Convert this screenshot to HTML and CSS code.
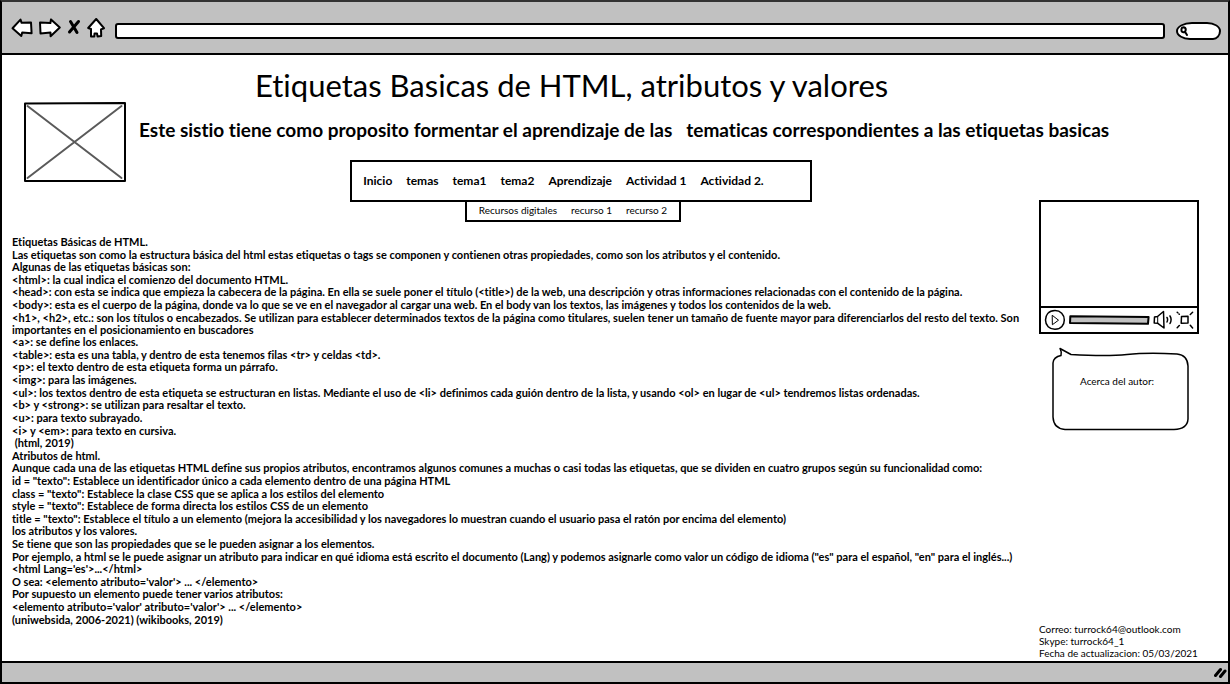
FILE: index.html
```html
<!DOCTYPE html>
<html lang="es">
<head>
<meta charset="utf-8">
<meta name="viewport" content="width=device-width, initial-scale=1">
<title>Etiquetas Basicas de HTML</title>
<link rel="stylesheet" href="styles.css">
</head>
<body>
<div class="browser">
  <div class="toolbar">
    <div class="toolbar-buttons">
      <button type="button" class="icon-button" aria-label="Atrás">
        <svg width="22" height="20" viewBox="0 0 22 20"><path class="sketch" d="M1.500 10.300 9.500 1.600 10.600 4.800 20 4.500 20.600 15.200 11.200 14.600 10.300 18Z"/></svg>
      </button>
      <button type="button" class="icon-button" aria-label="Adelante">
        <svg width="22" height="20" viewBox="0 0 22 20"><path class="sketch" d="M20.800 9.600 12 1.400 11.400 5 1 4.500 1.500 15.500 11.500 14.600 11.600 18.300Z"/></svg>
      </button>
      <button type="button" class="icon-button" aria-label="Detener">
        <svg width="14" height="20" viewBox="0 0 14 20"><path class="cross" d="M3.500 3.500 10 14.500M11.500 3.500 2.500 14"/></svg>
      </button>
      <button type="button" class="icon-button" aria-label="Inicio">
        <svg width="18" height="20" viewBox="0 0 18 20"><path class="sketch" d="M9.200 1 1.200 10 4 11 4 18.600 7.300 18.500 7.500 15.500 10 15.500 10.600 18.600 14.200 18 14 11.400 17 10.200Z"/></svg>
      </button>
    </div>
    <input class="address" type="text" aria-label="Dirección">
    <div class="search">
      <svg class="search-icon" width="8" height="10" viewBox="0 0 8 10" aria-hidden="true"><path d="M3.500 1.200C1 1.200.6 5.800 3.200 6.200 6.600 6.500 6.500 1.300 3.500 1.200M5 5.800 7 9"/></svg>
      <input class="search-input" type="search" aria-label="Buscar">
    </div>
  </div>

  <div class="page">
    <svg class="picture" width="102" height="80" viewBox="0 0 102 80" role="img" aria-label="Imagen">
      <path class="picture-frame" d="M1 1.500 101 1 101 79 1 79Z"/>
      <path class="picture-cross" d="M3.500 4 97.500 76M97.500 4 3.500 76"/>
    </svg>

    <header class="headings">
      <h1 class="title">Etiquetas Basicas de HTML, atributos y valores</h1>
      <p class="subtitle"><span>Este sistio tiene como proposito formentar el aprendizaje de las</span> <span>tematicas correspondientes a las etiquetas basicas</span></p>
    </header>

    <div class="menus">
      <nav class="menu" aria-label="Principal">
        <a href="#inicio">Inicio</a>
        <a href="#temas">temas</a>
        <a href="#tema1">tema1</a>
        <a href="#tema2">tema2</a>
        <a href="#aprendizaje">Aprendizaje</a>
        <a href="#actividad1">Actividad 1</a>
        <a href="#actividad2">Actividad 2.</a>
      </nav>
      <nav class="submenu" aria-label="Recursos">
        <a href="#recursos">Recursos digitales</a>
        <a href="#recurso1">recurso 1</a>
        <a href="#recurso2">recurso 2</a>
      </nav>
    </div>

    <main class="article">
      <p>Etiquetas Básicas de HTML.</p>
      <p>Las etiquetas son como la estructura básica del html estas etiquetas o tags se componen y contienen otras propiedades, como son los atributos y el contenido.</p>
      <p>Algunas de las etiquetas básicas son:</p>
      <p>&lt;html&gt;: la cual indica el comienzo del documento HTML.</p>
      <p>&lt;head&gt;: con esta se indica que empieza la cabecera de la página. En ella se suele poner el título (&lt;title&gt;) de la web, una descripción y otras informaciones relacionadas con el contenido de la página.</p>
      <p>&lt;body&gt;: esta es el cuerpo de la página, donde va lo que se ve en el navegador al cargar una web. En el body van los textos, las imágenes y todos los contenidos de la web.</p>
      <p>&lt;h1&gt;, &lt;h2&gt;, etc.: son los títulos o encabezados. Se utilizan para establecer determinados textos de la página como titulares, suelen tener un tamaño de fuente mayor para diferenciarlos del resto del texto. Son importantes en el posicionamiento en buscadores</p>
      <p>&lt;a&gt;: se define los enlaces.</p>
      <p>&lt;table&gt;: esta es una tabla, y dentro de esta tenemos filas &lt;tr&gt; y celdas &lt;td&gt;.</p>
      <p>&lt;p&gt;: el texto dentro de esta etiqueta forma un párrafo.</p>
      <p>&lt;img&gt;: para las imágenes.</p>
      <p>&lt;ul&gt;: los textos dentro de esta etiqueta se estructuran en listas. Mediante el uso de &lt;li&gt; definimos cada guión dentro de la lista, y usando &lt;ol&gt; en lugar de &lt;ul&gt; tendremos listas ordenadas.</p>
      <p>&lt;b&gt; y &lt;strong&gt;: se utilizan para resaltar el texto.</p>
      <p>&lt;u&gt;: para texto subrayado.</p>
      <p>&lt;i&gt; y &lt;em&gt;: para texto en cursiva.</p>
      <p>&nbsp;(html, 2019)</p>
      <p>Atributos de html.</p>
      <p>Aunque cada una de las etiquetas HTML define sus propios atributos, encontramos algunos comunes a muchas o casi todas las etiquetas, que se dividen en cuatro grupos según su funcionalidad como:</p>
      <p>id = "texto": Establece un identificador único a cada elemento dentro de una página HTML</p>
      <p>class = "texto": Establece la clase CSS que se aplica a los estilos del elemento</p>
      <p>style = "texto": Establece de forma directa los estilos CSS de un elemento</p>
      <p>title = "texto": Establece el título a un elemento (mejora la accesibilidad y los navegadores lo muestran cuando el usuario pasa el ratón por encima del elemento)</p>
      <p>los atributos y los valores.</p>
      <p>Se tiene que son las propiedades que se le pueden asignar a los elementos.</p>
      <p>Por ejemplo, a html se le puede asignar un atributo para indicar en qué idioma está escrito el documento (Lang) y podemos asignarle como valor un código de idioma ("es" para el español, "en" para el inglés...)</p>
      <p>&lt;html Lang='es'&gt;...&lt;/html&gt;</p>
      <p>O sea: &lt;elemento atributo='valor'&gt; ... &lt;/elemento&gt;</p>
      <p>Por supuesto un elemento puede tener varios atributos:</p>
      <p>&lt;elemento atributo='valor' atributo='valor'&gt; ... &lt;/elemento&gt;</p>
      <p>(uniwebsida, 2006-2021) (wikibooks, 2019)</p>
    </main>

    <aside class="sidebar">
      <div class="player">
        <div class="screen"></div>
        <div class="controls">
          <button type="button" class="icon-button" aria-label="Reproducir">
            <svg width="22" height="22" viewBox="0 0 22 22"><path class="line" d="M11 1.500C4.500 1.500 1.500 6 1.500 11 1.500 16.500 5.500 20.300 11 20.300 17 20.300 20.300 16 20.300 11 20.300 5.500 16.500 1.500 11 1.500Z"/><path class="thin" d="M8.500 6.500 14.500 11.200 8.700 15.500Z"/></svg>
          </button>
          <svg class="track" height="10" viewBox="0 0 80 10" preserveAspectRatio="none" role="img" aria-label="Progreso"><path d="M1.300 1.200 78.600 2 78 8.800 1 8Z"/></svg>
          <button type="button" class="icon-button" aria-label="Volumen">
            <svg width="20" height="20" viewBox="0 0 20 20"><path class="line" d="M1.500 7 4.500 6.500 10.500 1.500 11 18 4.800 13.300 1.200 13Z"/><path class="thin" d="M4.700 6.500V13.300"/><path class="line" d="M14 7.500Q15.200 9.500 14 12M17 6Q19.200 9.500 17 13.500"/></svg>
          </button>
          <button type="button" class="icon-button" aria-label="Pantalla completa">
            <svg width="18" height="18" viewBox="0 0 18 18"><path class="line" d="M5.500 5.500 12 5.200 12 12 5.200 12.300Z"/><path class="line" d="M1.200 1.200 1.800 1.800M3 3 3.300 3.300M14.300 3.500 16.600 1.300M1.200 16.700 3.300 14.500M14.300 14.300 16.600 17"/></svg>
          </button>
        </div>
      </div>

      <section class="bubble">
        <svg class="bubble-shape" viewBox="0 0 137 84" preserveAspectRatio="none" aria-hidden="true"><path d="M9 8.500Q1.500 10 1 16V70Q1.500 81.500 13 82.500H122Q135.500 82 136 72V19Q135.500 8 125 7Q95 5.500 75 7.500T19 7.500L8 1.500Q10 5 9 8.500"/></svg>
        <p class="bubble-text">Acerca del autor:</p>
      </section>

      <address class="contact">
        <p>Correo: turrock64@outlook.com</p>
        <p>Skype: turrock64_1</p>
        <p>Fecha de actualizacion: 05/03/2021</p>
      </address>
    </aside>
  </div>

  <div class="statusbar">
    <svg width="13" height="12" viewBox="0 0 13 12" aria-hidden="true"><path class="grip" d="M1.500 8.500 6.500 2.500M6.500 9.500 11 4"/></svg>
  </div>
</div>
</body>
</html>
```
FILE: styles.css
```css
* {
  box-sizing: border-box;
}

body {
  margin: 0;
  background: #fff;
  color: #000;
  font-family: Lato, "Open Sans", sans-serif;
  font-variant-ligatures: none;
}

h1,
p {
  margin: 0;
}

a {
  color: inherit;
  text-decoration: none;
}

svg {
  display: block;
  fill: none;
  stroke: #000;
  stroke-linecap: round;
  stroke-linejoin: round;
}

.browser {
  display: flex;
  flex-direction: column;
  min-height: 100vh;
  border: 2px solid #000;
  border-top-color: #333;
}

.toolbar {
  display: flex;
  align-items: center;
  height: 53px;
  padding: 0 7px 0 9px;
  background: #c1c1c1;
  border-bottom: 2px solid #000;
}

.toolbar-buttons {
  display: flex;
  align-items: center;
  gap: 6px;
  margin-right: 10px;
}

.icon-button {
  padding: 0;
  border: 0;
  background: none;
}

.sketch {
  fill: #fff;
  stroke-width: 2;
}

.cross {
  stroke-width: 3;
}

.address {
  flex: 1;
  min-width: 0;
  height: 16px;
  margin-top: 6px;
  padding: 0 6px;
  border: 2px solid #000;
  border-radius: 3px;
  background: #fff;
  font: inherit;
  font-size: 11px;
}

.search {
  display: flex;
  align-items: center;
  width: 45px;
  height: 18px;
  margin: 6px 0 0 11px;
  padding: 0 4px 0 2px;
  border: 2px solid #000;
  border-radius: 16px 14px 8px 14px / 9px;
  background: #fff;
}

.search-icon {
  flex: none;
  stroke-width: 2;
}

.search-input {
  width: 100%;
  min-width: 0;
  height: 12px;
  padding: 0;
  border: 0;
  background: none;
  font-size: 10px;
}

.page {
  flex: 1;
  display: grid;
  grid-template-columns: 137px 1fr 189px;
  grid-template-rows: auto auto 1fr;
}

.picture {
  grid-area: 1 / 1 / 3 / 2;
  margin: 47px 0 0 22px;
}

.picture-frame {
  stroke-width: 2;
}

.picture-cross {
  stroke: #5a5a5a;
  stroke-width: 2;
}

.headings {
  grid-area: 1 / 2 / 2 / 4;
}

.title {
  padding-left: 116px;
  margin-top: 12px;
  font-size: 31px;
  line-height: 36px;
  font-weight: 400;
}

.subtitle {
  display: flex;
  flex-wrap: wrap;
  gap: 14px;
  margin: 15px 0 18px;
  font-size: 19px;
  line-height: 24px;
  font-weight: 700;
}

.menus {
  grid-area: 2 / 2 / 3 / 3;
  display: flex;
  flex-direction: column;
  align-items: center;
  padding-right: 16px;
}

.menu {
  display: flex;
  align-items: center;
  gap: 14px;
  height: 42px;
  padding: 0 46px 0 11px;
  border: 2px solid #000;
  font-size: 12px;
  line-height: 16px;
  font-weight: 700;
}

.submenu {
  display: flex;
  align-items: center;
  gap: 14px;
  height: 22px;
  margin: -2px 16px 0 0;
  padding: 0 12px 2px;
  border: 2px solid #000;
  background: #fff;
  font-size: 10px;
  line-height: 14px;
}

/* Lines share the free height evenly between the menus and the status bar. */
.article {
  grid-area: 3 / 1 / 4 / 3;
  display: flex;
  flex-direction: column;
  justify-content: space-between;
  padding: 14px 12px 35px 10px;
  font-size: 11px;
  line-height: 12px;
  font-weight: 700;
}

.sidebar {
  grid-area: 2 / 3 / 4 / 4;
  display: flex;
  flex-direction: column;
  padding: 40px 0 2px;
}

.player {
  width: 160px;
  border: 2px solid #000;
}

.screen {
  height: 106px;
  border-bottom: 2px solid #000;
}

.controls {
  display: flex;
  align-items: center;
  gap: 3px;
  height: 24px;
  padding: 0 3px;
}

.line {
  stroke-width: 1.5;
}

.thin {
  stroke-width: 1;
}

.track {
  flex: 1;
  min-width: 0;
  fill: #c1c1c1;
  stroke-width: 2;
}

.bubble {
  position: relative;
  width: 137px;
  height: 84px;
  margin: 13px 0 0 13px;
  padding: 27px 0 0 28px;
}

.bubble-shape {
  position: absolute;
  inset: 0;
  width: 100%;
  height: 100%;
  stroke-width: 1.5;
}

.bubble-text {
  font-size: 10px;
  line-height: 14px;
}

.contact {
  margin-top: auto;
  font-size: 10px;
  font-style: normal;
  line-height: 12px;
}

.statusbar {
  display: flex;
  align-items: center;
  justify-content: flex-end;
  height: 21px;
  padding-right: 1px;
  background: #c1c1c1;
  border-top: 2px solid #000;
}

.grip {
  stroke-width: 3;
}
```
